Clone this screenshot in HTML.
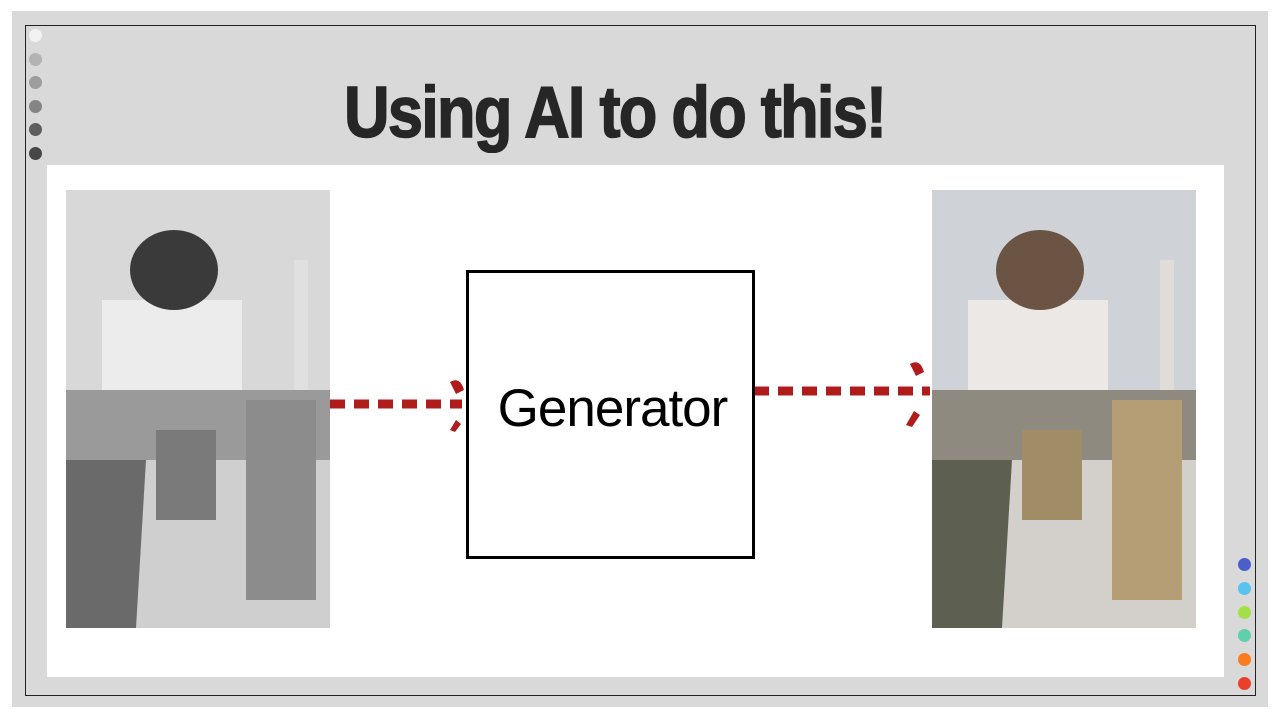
<!DOCTYPE html>
<html><head><style>
body{margin:0;width:1280px;height:720px;background:#fff;position:relative;overflow:hidden;font-family:"Liberation Sans",sans-serif}
.bg{position:absolute;left:12px;top:11px;width:1256px;height:696px;background:#d9d9d9}
.frame{position:absolute;left:25px;top:25px;width:1229px;height:669px;border:1.5px solid #222}
.dot{position:absolute;width:13px;height:13px;border-radius:50%}
.panel{position:absolute;left:47px;top:165px;width:1177px;height:512px;background:#fff}
h1{position:absolute;left:344px;top:72px;margin:0;font-family:"Liberation Sans",sans-serif;font-weight:bold;font-size:72px;color:#262626;letter-spacing:-2px;transform:scaleX(0.877);transform-origin:left top;white-space:nowrap;-webkit-text-stroke:1.5px #262626}
.box{position:absolute;left:466px;top:270px;width:283px;height:283px;border:3px solid #000;background:#fff}
.gen{position:absolute;left:468px;top:378px;width:289px;text-align:center;font-size:53px;color:#000;letter-spacing:-1px}
.ph{position:absolute;top:190px;width:264px;height:438px}
</style></head><body>
<div class="bg"></div>
<div class="frame"></div>
<div class="dot" style="left:29px;top:29px;background:#f2f2f2"></div>
<div class="dot" style="left:29px;top:53px;background:#b3b3b3"></div>
<div class="dot" style="left:29px;top:76px;background:#9d9d9d"></div>
<div class="dot" style="left:29px;top:100px;background:#858585"></div>
<div class="dot" style="left:29px;top:123px;background:#5e5e5e"></div>
<div class="dot" style="left:29px;top:147px;background:#474747"></div>
<div class="dot" style="left:1238px;top:558px;background:#4a5fc9"></div>
<div class="dot" style="left:1238px;top:582px;background:#56c4ef"></div>
<div class="dot" style="left:1238px;top:606px;background:#a3e048"></div>
<div class="dot" style="left:1238px;top:629px;background:#5fcfae"></div>
<div class="dot" style="left:1238px;top:653px;background:#f97d1f"></div>
<div class="dot" style="left:1238px;top:677px;background:#e8402a"></div>
<h1>Using AI to do this!</h1>
<div class="panel"></div>
<svg class="ph" style="left:66px" viewBox="0 0 264 438">
<rect width="264" height="438" fill="#d8d8d8"/>
<rect x="36" y="110" width="140" height="100" fill="#ececec"/>
<ellipse cx="108" cy="80" rx="44" ry="40" fill="#3a3a3a"/>
<rect x="228" y="70" width="14" height="150" fill="#e0e0e0"/>
<rect x="0" y="200" width="264" height="70" fill="#9a9a9a"/>
<rect x="0" y="270" width="80" height="168" fill="#6a6a6a"/>
<polygon points="80,270 264,270 264,438 70,438" fill="#cfcfcf"/>
<rect x="180" y="210" width="70" height="200" fill="#8c8c8c"/>
<rect x="90" y="240" width="60" height="90" fill="#7a7a7a"/>
</svg>
<svg class="ph" style="left:932px" viewBox="0 0 264 438">
<rect width="264" height="438" fill="#cfd3d8"/>
<rect x="36" y="110" width="140" height="100" fill="#ebe8e6"/>
<ellipse cx="108" cy="80" rx="44" ry="40" fill="#6b5443"/>
<rect x="228" y="70" width="14" height="150" fill="#e0ddd8"/>
<rect x="0" y="200" width="264" height="70" fill="#8f8a80"/>
<rect x="0" y="270" width="80" height="168" fill="#5d6050"/>
<polygon points="80,270 264,270 264,438 70,438" fill="#d3d0cc"/>
<rect x="180" y="210" width="70" height="200" fill="#b59e76"/>
<rect x="90" y="240" width="60" height="90" fill="#a08d66"/>
</svg>
<svg style="position:absolute;left:0;top:0" width="1280" height="720">
<line x1="330" y1="404" x2="462" y2="404" stroke="#b01c1c" stroke-width="9" stroke-dasharray="15,9"/>
<path d="M450 382 q10 -6 14 8 l-8 4z M450 430 l6 -10 5 4 -6 8z" fill="#b01c1c"/>
<line x1="754" y1="391" x2="930" y2="391" stroke="#b01c1c" stroke-width="9" stroke-dasharray="15,9"/>
<path d="M910 364 q10 -6 14 8 l-8 4z M906 425 l8 -14 6 4 -8 12z" fill="#b01c1c"/>
</svg>
<div class="box"></div>
<div class="gen">Generator</div>
</body></html>
